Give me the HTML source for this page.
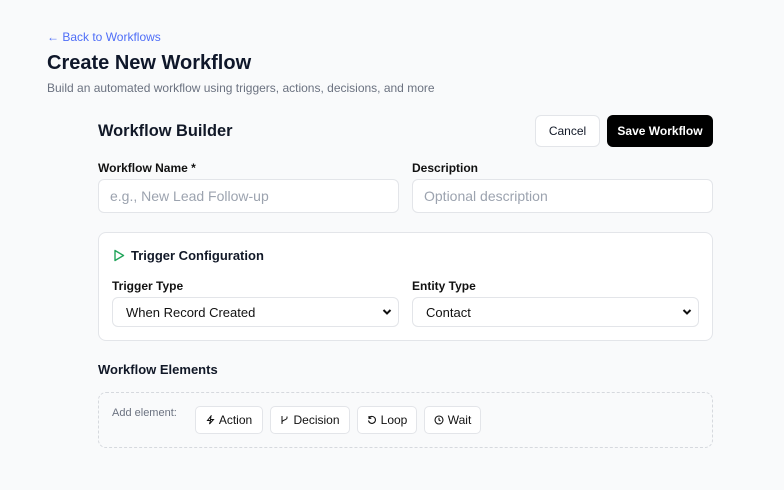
<!DOCTYPE html>
<html><head><style>
*{box-sizing:border-box;margin:0;padding:0}
body{width:784px;height:490px;background:#f9fafb;font-family:"Liberation Sans",sans-serif;color:#111827;position:relative;overflow:hidden}
.a{position:absolute;white-space:nowrap}
.inp{position:absolute;background:#fff;border:1px solid #e3e5e9;border-radius:6px;font-size:14px;color:#9ca3af;padding-left:11px;display:flex;align-items:center}
.btn{position:absolute;background:#fff;border:1px solid #e3e5e9;border-radius:5px;font-size:12px;color:#111;display:flex;align-items:center;justify-content:center;gap:4px;height:28px;top:406px}
.lbl{font-size:12px;font-weight:bold;color:#111}
</style></head><body>
<div class="a" style="left:47px;top:30px;font-size:12px;color:#4f6ef7">← Back to Workflows</div>
<div class="a" style="left:47px;top:52px;font-size:20px;font-weight:bold;color:#0f172a">Create New Workflow</div>
<div class="a" style="left:47px;top:81px;font-size:12px;color:#6b7280">Build an automated workflow using triggers, actions, decisions, and more</div>
<div class="a" style="left:98px;top:122px;font-size:16.4px;font-weight:bold">Workflow Builder</div>
<div class="a" style="left:535px;top:115px;width:65px;height:32px;background:#fff;border:1px solid #e3e5e9;border-radius:6px;font-size:12px;display:flex;align-items:center;justify-content:center">Cancel</div>
<div class="a" style="left:607px;top:115px;width:106px;height:32px;background:#000;color:#fff;border-radius:6px;font-size:12px;font-weight:bold;display:flex;align-items:center;justify-content:center">Save Workflow</div>
<div class="a lbl" style="left:98px;top:161px">Workflow Name *</div>
<div class="a lbl" style="left:412px;top:161px">Description</div>
<div class="inp" style="left:98px;top:179px;width:301px;height:34px">e.g., New Lead Follow-up</div>
<div class="inp" style="left:412px;top:179px;width:301px;height:34px">Optional description</div>
<div class="a" style="left:98px;top:232px;width:615px;height:109px;background:#fff;border:1px solid #e3e5e9;border-radius:8px"></div>
<svg class="a" style="left:113px;top:249px" width="12" height="13" viewBox="0 0 12 13"><path d="M2 1.5 L10.5 6.5 L2 11.5Z" fill="none" stroke="#22a55b" stroke-width="1.4" stroke-linejoin="round"/></svg>
<div class="a" style="left:131px;top:248px;font-size:13px;font-weight:bold">Trigger Configuration</div>
<div class="a lbl" style="left:112px;top:279px">Trigger Type</div>
<div class="a lbl" style="left:412px;top:279px">Entity Type</div>
<div class="inp" style="left:112px;top:297px;width:287px;height:30px;color:#111;padding-left:13px;font-size:13px">When Record Created<svg style="position:absolute;right:6px;top:10px" width="10" height="8" viewBox="0 0 10 8"><path d="M1.5 2 L5 5.5 L8.5 2" fill="none" stroke="#111" stroke-width="2"/></svg></div>
<div class="inp" style="left:412px;top:297px;width:287px;height:30px;color:#111;padding-left:13px;font-size:13px">Contact<svg style="position:absolute;right:6px;top:10px" width="10" height="8" viewBox="0 0 10 8"><path d="M1.5 2 L5 5.5 L8.5 2" fill="none" stroke="#111" stroke-width="2"/></svg></div>
<div class="a" style="left:98px;top:362px;font-size:13px;font-weight:bold">Workflow Elements</div>
<div class="a" style="left:98px;top:392px;width:615px;height:56px;border:1px dashed #d6d9de;border-radius:8px"></div>
<div class="a" style="left:112px;top:407px;font-size:11px;color:#6b7280">Add element:</div>
<div class="btn" style="left:195px;width:68px"><svg width="9" height="10" viewBox="0 0 9 10"><path d="M5 1 L1.5 5.5 H4.5 L3.5 9 L7.5 4.5 H4.5Z" fill="none" stroke="#111" stroke-width="1"/></svg>Action</div>
<div class="btn" style="left:270px;width:80px"><svg width="9" height="10" viewBox="0 0 9 10"><path d="M2 1 V9 M2 7 C2 5 7 5 7 3 M7 1.5 V3" fill="none" stroke="#111" stroke-width="1"/></svg>Decision</div>
<div class="btn" style="left:357px;width:60px"><svg width="10" height="10" viewBox="0 0 10 10"><path d="M2 3 A3.5 3.5 0 1 1 1.5 5.5 M2 1 V3.3 H4.3" fill="none" stroke="#111" stroke-width="1.1"/></svg>Loop</div>
<div class="btn" style="left:424px;width:57px"><svg width="10" height="10" viewBox="0 0 10 10"><circle cx="5" cy="5" r="4" fill="none" stroke="#111" stroke-width="1.1"/><path d="M5 2.8 V5 L6.5 6" fill="none" stroke="#111" stroke-width="1.1"/></svg>Wait</div>
</body></html>
